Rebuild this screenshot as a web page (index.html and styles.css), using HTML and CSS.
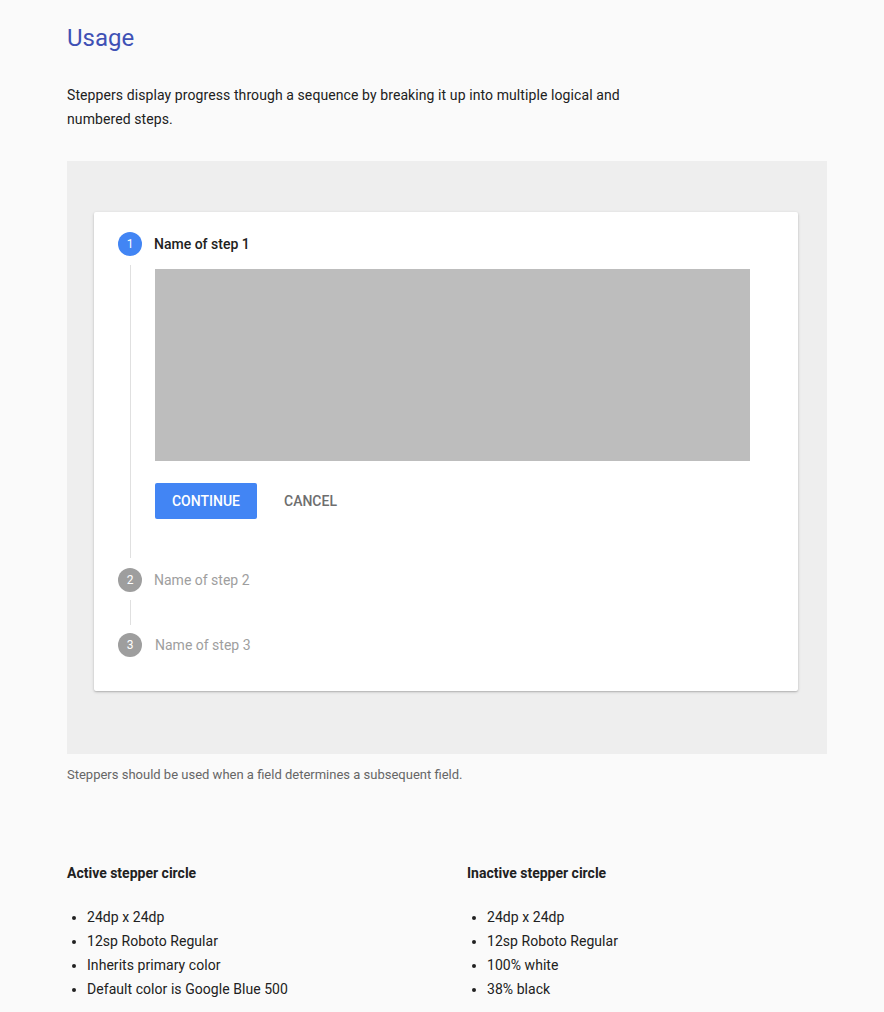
FILE: index.html
```html
<!DOCTYPE html>
<html lang="en">
<head>
<meta charset="utf-8">
<title>Steppers – Usage</title>
<link rel="stylesheet" href="styles.css">
</head>
<body>
<main class="page">
  <h1 class="title">Usage</h1>
  <p class="intro">Steppers display progress through a sequence by breaking it up into multiple logical and numbered steps.</p>

  <figure class="demo">
    <div class="card">
      <div class="step step-active">
        <div class="step-head">
          <span class="circle circle-active">1</span>
          <span class="label label-active">Name of step 1</span>
        </div>
        <div class="step-body">
          <div class="placeholder"></div>
          <div class="actions">
            <button class="btn btn-primary">Continue</button>
            <button class="btn btn-flat">Cancel</button>
          </div>
        </div>
      </div>
      <div class="step">
        <div class="step-head">
          <span class="circle">2</span>
          <span class="label">Name of step 2</span>
        </div>
        <div class="connector"></div>
      </div>
      <div class="step">
        <div class="step-head">
          <span class="circle">3</span>
          <span class="label label-3">Name of step 3</span>
        </div>
      </div>
    </div>
  </figure>
  <p class="caption">Steppers should be used when a field determines a subsequent field.</p>

  <section class="specs">
    <div class="spec">
      <h3 class="spec-title">Active stepper circle</h3>
      <ul class="spec-list">
        <li>24dp x 24dp</li>
        <li>12sp Roboto Regular</li>
        <li>Inherits primary color</li>
        <li>Default color is Google Blue 500</li>
      </ul>
    </div>
    <div class="spec">
      <h3 class="spec-title">Inactive stepper circle</h3>
      <ul class="spec-list">
        <li>24dp x 24dp</li>
        <li>12sp Roboto Regular</li>
        <li>100% white</li>
        <li>38% black</li>
      </ul>
    </div>
  </section>
</main>
</body>
</html>
```

FILE: styles.css
```css
html, body {
  margin: 0;
  padding: 0;
  background: #fafafa;
}

body {
  font-family: Roboto, "Noto Sans", "Liberation Sans", sans-serif;
  color: #212121;
}

.page {
  padding: 22px 0 0 67px;
  width: 760px;
}

.title {
  margin: 0;
  font-size: 24px;
  line-height: 32px;
  font-weight: 400;
  color: #3f51b5;
}

.intro {
  margin: 29px 0 0;
  width: 580px;
  font-size: 14px;
  line-height: 24px;
  letter-spacing: 0.09px;
  color: #212121;
}

.demo {
  margin: 30px 0 0;
  background: #eeeeee;
  padding: 51px 29px 63px 27px;
}

.card {
  background: #ffffff;
  border-radius: 2px;
  box-shadow: 0 1px 3px rgba(0, 0, 0, 0.22), 0 1px 1px rgba(0, 0, 0, 0.08);
  padding: 20px 24px 34px;
}

.step-head {
  display: flex;
  align-items: center;
  gap: 12px;
  height: 24px;
}

.circle {
  width: 24px;
  height: 24px;
  border-radius: 50%;
  background: #9e9e9e;
  color: #ffffff;
  font-size: 12px;
  line-height: 24px;
  text-align: center;
  flex: none;
}

.circle-active {
  background: #4285f4;
}

.label {
  font-size: 14px;
  color: #9e9e9e;
}

.label-active {
  color: #212121;
  font-weight: 500;
}

.label-3 {
  margin-left: 1px;
}

.step-body {
  margin: 9px 0 10px 12px;
  border-left: 1px solid #e0e0e0;
  padding: 4px 0 39px 24px;
}

.placeholder {
  width: 595px;
  height: 192px;
  background: #bdbdbd;
}

.actions {
  display: flex;
  align-items: center;
  gap: 11px;
  margin-top: 22px;
}

.btn {
  font-family: inherit;
  font-size: 14px;
  font-weight: 500;
  text-transform: uppercase;
  height: 36px;
  border: none;
  border-radius: 2px;
  padding: 0 16px;
  background: transparent;
  cursor: pointer;
}

.btn-primary {
  width: 102px;
  background: #4285f4;
  color: #ffffff;
}

.btn-flat {
  color: #6e6e6e;
}

.connector {
  margin: 8px 0 8px 12px;
  height: 25px;
  border-left: 1px solid #e0e0e0;
}

.caption {
  margin: 11px 0 0;
  font-size: 13px;
  line-height: 20px;
  color: #666666;
}

.specs {
  display: grid;
  grid-template-columns: 400px 360px;
  margin-top: 76px;
}

.spec-title {
  margin: 0;
  font-size: 14px;
  line-height: 24px;
  font-weight: 700;
  color: #212121;
}

.spec-list {
  margin: 20px 0 0;
  padding-left: 20px;
  font-size: 14px;
  line-height: 24px;
  letter-spacing: 0.05px;
  color: #212121;
}
```
